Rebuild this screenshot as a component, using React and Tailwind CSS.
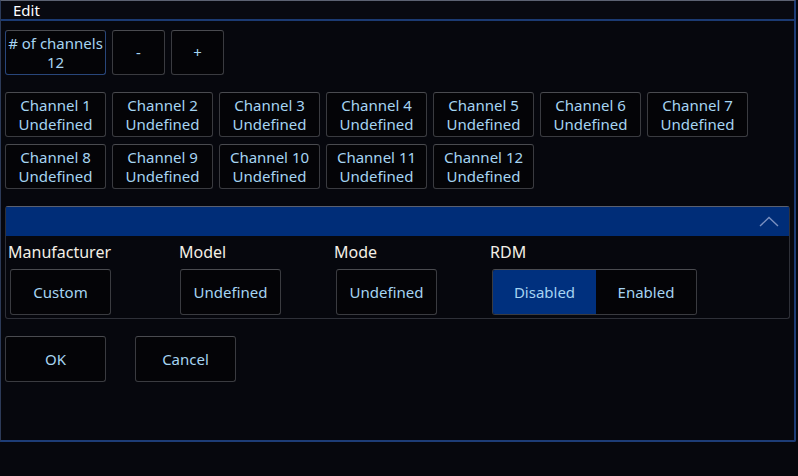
const font = { fontFamily: '"Noto Sans", "Open Sans", sans-serif' }

function Btn({ children, className = '', active = false }) {
  return (
    <div
      className={`flex flex-col items-center justify-center rounded-[3px] border border-[#3a3b40] border-t-[#4a4b50] text-[15px] leading-[19px] text-[#a6d4f2] ${
        active ? 'bg-[#00307e]' : 'bg-[#040407]'
      } ${className}`}
    >
      {children}
    </div>
  )
}

export default function App() {
  const channels = Array.from({ length: 12 }, (_, i) => i + 1)

  return (
    <div className="w-[798px] h-[476px] bg-[#06070d] overflow-hidden" style={font}>
      <div className="w-[796px] h-[442px] flex flex-col border-t border-l border-t-[#5c6272] border-l-[#2c3a58] border-r-2 border-b-2 border-r-[#1d3c76] border-b-[#1d3c76] rounded-br-[2px]">
        <div className="h-[20px] shrink-0 flex items-center pl-[12px] text-[15px] text-white border-b-2 border-[#1b3a72] bg-[#080910]">
          Edit
        </div>

        <div className="flex gap-[6px] pl-[4px] pt-[9px]">
          <Btn className="w-[101px] h-[45px] border-[#28467a] border-t-[#3a5a90]">
            <span>#&nbsp;of channels</span>
            <span>12</span>
          </Btn>
          <Btn className="w-[53px] h-[45px]">-</Btn>
          <Btn className="w-[53px] h-[45px]">+</Btn>
        </div>

        <div className="grid grid-cols-[repeat(7,101px)] gap-x-[6px] gap-y-[7px] pl-[4px] pt-[17px]">
          {channels.map((n) => (
            <Btn key={n} className="h-[45px]">
              <span>Channel {n}</span>
              <span>Undefined</span>
            </Btn>
          ))}
        </div>

        <div className="mx-[4px] mt-[17px] h-[113px] flex flex-col rounded-[3px] border border-[#2e3038] border-t-[#5a6070]">
          <div className="h-[29px] shrink-0 bg-[#002d78] flex items-center justify-end pr-[10px]">
            <svg width="20" height="11" viewBox="0 0 20 11" fill="none">
              <polyline points="1,10 10,1.5 19,10" stroke="#7a90c0" strokeWidth="1.4" />
            </svg>
          </div>
          <div className="flex pt-[5px]">
            <div className="w-[173px] flex flex-col pl-[2px]">
              <span className="text-[16px] leading-[22px] text-[#f3efe6]">Manufacturer</span>
              <Btn className="mt-[6px] ml-[2px] w-[101px] h-[46px]">Custom</Btn>
            </div>
            <div className="w-[155px] flex flex-col">
              <span className="text-[16px] leading-[22px] text-[#f3efe6]">Model</span>
              <Btn className="mt-[6px] ml-[1px] w-[101px] h-[46px]">Undefined</Btn>
            </div>
            <div className="w-[156px] flex flex-col">
              <span className="text-[16px] leading-[22px] text-[#f3efe6]">Mode</span>
              <Btn className="mt-[6px] ml-[2px] w-[101px] h-[46px]">Undefined</Btn>
            </div>
            <div className="flex flex-col">
              <span className="text-[16px] leading-[22px] text-[#f3efe6]">RDM</span>
              <div className="mt-[6px] ml-[2px] flex w-[205px] h-[46px] rounded-[3px] border border-[#3a3b40] border-t-[#4a4b50] overflow-hidden text-[15px] text-[#a6d4f2]">
                <div className="w-[103px] flex items-center justify-center bg-[#00307e]">Disabled</div>
                <div className="flex-1 flex items-center justify-center bg-[#040407]">Enabled</div>
              </div>
            </div>
          </div>
        </div>

        <div className="flex gap-[29px] pl-[4px] pt-[17px]">
          <Btn className="w-[101px] h-[46px]">OK</Btn>
          <Btn className="w-[101px] h-[46px]">Cancel</Btn>
        </div>
      </div>
    </div>
  )
}
